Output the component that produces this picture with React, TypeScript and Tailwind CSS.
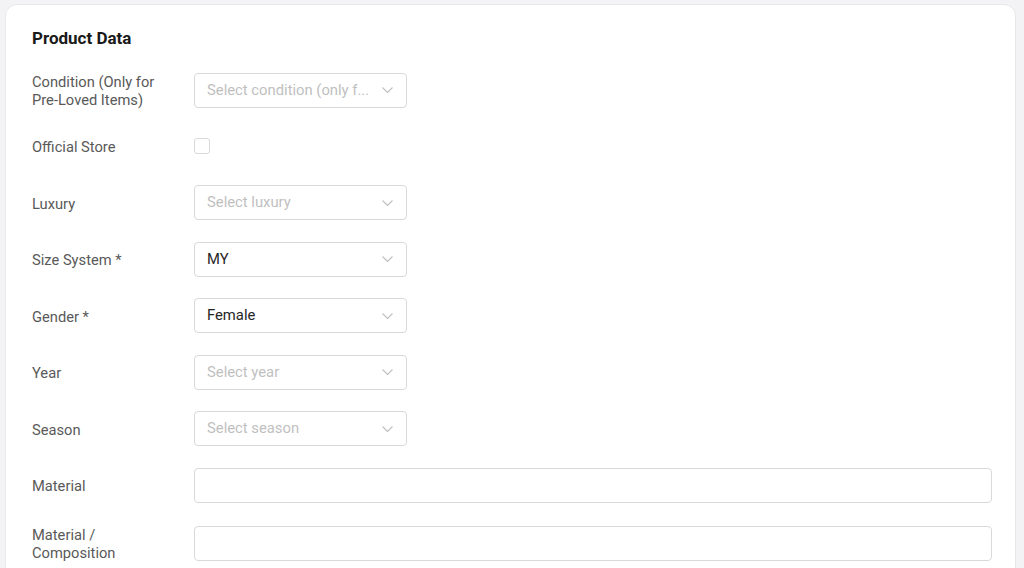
type Row =
  | { label: string; kind: "select"; value?: string; placeholder?: string }
  | { label: string; kind: "checkbox" }
  | { label: string; kind: "input" };

const rows: Row[] = [
  { label: "Condition (Only for Pre-Loved Items)", kind: "select", placeholder: "Select condition (only f..." },
  { label: "Official Store", kind: "checkbox" },
  { label: "Luxury", kind: "select", placeholder: "Select luxury" },
  { label: "Size System *", kind: "select", value: "MY" },
  { label: "Gender *", kind: "select", value: "Female" },
  { label: "Year", kind: "select", placeholder: "Select year" },
  { label: "Season", kind: "select", placeholder: "Select season" },
  { label: "Material", kind: "input" },
  { label: "Material / Composition", kind: "input" },
];

function Chevron() {
  return (
    <svg width="11" height="6" viewBox="0 0 11 6" fill="none" className="ml-2 shrink-0">
      <path d="M0.5 0.5 L5.5 5.5 L10.5 0.5" stroke="#bfbfbf" strokeWidth="1.1" />
    </svg>
  );
}

function Field({ row }: { row: Row }) {
  if (row.kind === "checkbox") {
    return <div className="w-4 h-4 border border-[#d9d9d9] rounded-[3px] bg-white" />;
  }
  if (row.kind === "input") {
    return <div className="flex-1 h-[35px] border border-[#d9d9d9] rounded-[4px] bg-white" />;
  }
  return (
    <div className="w-[213px] h-[35px] border border-[#d9d9d9] rounded-[4px] bg-white flex items-center pl-3 pr-[13px]">
      <span
        className={
          "flex-1 text-[14.8px] whitespace-nowrap " +
          (row.value ? "text-[#262626]" : "text-[#bfbfbf]")
        }
      >
        {row.value ?? row.placeholder}
      </span>
      <Chevron />
    </div>
  );
}

export default function App() {
  return (
    <div
      className="min-h-[568px] bg-[#f3f3f5] pt-[4px] pl-[5px] pr-[8px]"
      style={{ fontFamily: "Roboto, 'Liberation Sans', sans-serif" }}
    >
      <div className="bg-white border border-[#e8e8ea] rounded-[12px] pt-[21px] pl-[26px] pr-[23px] pb-6">
        <h2 className="text-[17px] leading-6 font-bold text-[#1a1a1a] mb-[21px]">Product Data</h2>

        <div className="flex flex-col gap-[21.5px]">
          {rows.map((row, i) => (
            <div
              key={row.label}
              className={"flex items-center min-h-[35px] " + (i === 0 ? "-mb-[2px]" : "")}
            >
              <label className="w-[140px] mr-[22px] pt-[2px] text-[14.7px] leading-[18px] text-[#595959]">
                {row.label}
              </label>
              <Field row={row} />
            </div>
          ))}
        </div>
      </div>
    </div>
  );
}
